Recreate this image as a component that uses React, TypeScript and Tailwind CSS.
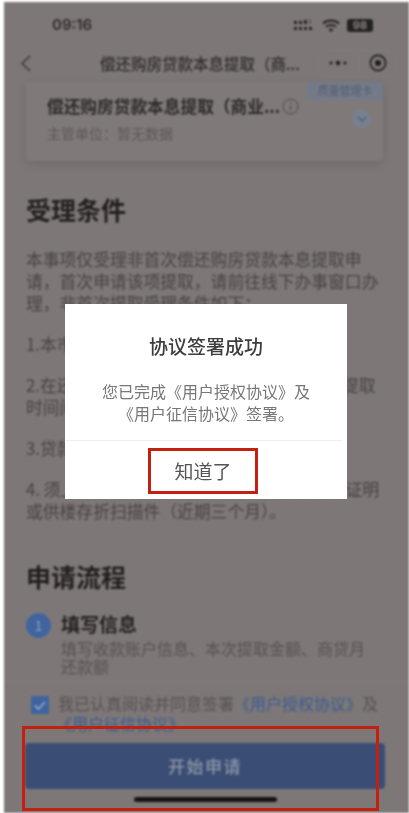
const font = '[font-family:"Noto_Sans_CJK_SC","Noto_Sans",sans-serif]';

function StatusBar() {
  return (
    <div className="flex h-[43px] items-start justify-between pl-[48px] pr-[36px] pt-[13px]">
      <span className="text-[15px] leading-[20px] font-semibold text-[#2f2c2c] [font-family:Inter,sans-serif]">09:16</span>
      <div className="flex h-[20px] items-center gap-[7px]">
        <svg width="21" height="13" viewBox="0 0 21 13" fill="#262323">
          <rect x="0" y="2" width="3" height="3" />
          <rect x="5" y="2" width="3" height="3" />
          <rect x="10" y="1" width="3" height="4" />
          <rect x="15" y="0" width="2" height="5" fill="#5f5b5b" />
          <rect x="0" y="8" width="3" height="3" />
          <rect x="5" y="8" width="3" height="3" />
          <rect x="10" y="8" width="3" height="3" />
          <rect x="15" y="8" width="3" height="3" />
        </svg>
        <svg width="18" height="13" viewBox="0 0 18 13" fill="none" stroke="#262323" strokeWidth="2">
          <path d="M1 4.5C5.5 .5 12.5 .5 17 4.5" />
          <path d="M4 7.8C6.8 5.5 11.2 5.5 14 7.8" />
          <path d="M9 13L6.5 10.3C8 9.2 10 9.2 11.5 10.3Z" fill="#262323" stroke="none" />
        </svg>
        <span className="flex h-[13px] w-[26px] items-center justify-center rounded-[3px] bg-[#242121] text-[11px] leading-none font-bold text-[#8a8585] [font-family:Inter,sans-serif]">98</span>
      </div>
    </div>
  );
}

function NavBar() {
  return (
    <div className="flex h-[36px] items-center pl-[16px] pr-[6px]">
      <svg width="11" height="17" viewBox="0 0 11 17" fill="none" stroke="#3a3737" strokeWidth="1.5">
        <path d="M10 1L2 8.5L10 16" />
      </svg>
      <span className="ml-[69px] w-[213px] text-[15.5px] leading-[22px] font-medium whitespace-nowrap text-[#2f2c2c]">偿还购房贷款本息提取（商...</span>
      <div className="ml-[4px] flex h-[27px] w-[81px] items-center rounded-full border border-[#827d7c]">
        <span className="flex w-[40px] justify-center">
          <svg width="20" height="6" viewBox="0 0 20 6" fill="#1f1c1c">
            <circle cx="3" cy="3" r="1.5" />
            <circle cx="10" cy="3" r="2.2" />
            <circle cx="17" cy="3" r="1.5" />
          </svg>
        </span>
        <span className="h-[18px] w-px bg-[#837e7d]" />
        <span className="flex flex-1 justify-center">
          <svg width="18" height="18" viewBox="0 0 18 18" fill="none" stroke="#1f1c1c" strokeWidth="1.6">
            <circle cx="9" cy="9" r="7.6" />
            <circle cx="9" cy="9" r="3" fill="#1f1c1c" stroke="none" />
          </svg>
        </span>
      </div>
    </div>
  );
}

function ServiceCard() {
  return (
    <div className="relative ml-[22px] mt-[1px] h-[79px] w-[357px] rounded-b-[4px] bg-[#7f7a79] pl-[21px] pt-[12px] shadow-[0_3px_8px_rgba(50,46,46,0.18)]">
      <span className="absolute right-0 top-0 h-[18px] w-[76px] bg-[#737a8a] text-center text-[11px] leading-[17px] text-[#575d6b]">质量管理卡</span>
      <div className="flex items-center">
        <span className="text-[16.7px] leading-[24px] font-bold whitespace-nowrap text-[#2d2a2a]">偿还购房贷款本息提取（商业...</span>
        <svg className="ml-[2px]" width="17" height="17" viewBox="0 0 17 17" fill="none" stroke="#4d4949">
          <circle cx="8.5" cy="8.5" r="7.5" />
          <path d="M8.5 7.5V12.5M8.5 4.5V6" />
        </svg>
      </div>
      <p className="mt-[5px] text-[14px] leading-[20px] text-[#5c5857]">主管单位：暂无数据</p>
      <span className="absolute right-[12px] top-[27px] flex h-[19px] w-[19px] items-center justify-center rounded-full bg-[#76808f]">
        <svg width="10" height="6" viewBox="0 0 10 6" fill="none" stroke="#545d70" strokeWidth="1.4">
          <path d="M1 1L5 5L9 1" />
        </svg>
      </span>
    </div>
  );
}

function Conditions() {
  return (
    <div className="mt-[32px] px-[22px]">
      <h2 className="text-[25px] leading-[32px] font-bold text-[#221f1f]">受理条件</h2>
      <div className="mt-[23px] flex flex-col gap-[19px] text-[16.8px] leading-[22px] whitespace-nowrap text-[#474343]">
        <p>本事项仅受理非首次偿还购房贷款本息提取申<br />请，首次申请该项提取，请前往线下办事窗口办<br />理，非首次提取受理条件如下：</p>
        <p>1.本市公积金缴存职工</p>
        <p>2.在还款期内的商业住房贷款，且符合规定提取<br />时间间隔要求</p>
        <p>3.贷款正常还款</p>
        <p>4. 须上传近期商业银行贷款结清证明或还款证明<br />或供楼存折扫描件（近期三个月）。</p>
      </div>
    </div>
  );
}

function Process() {
  return (
    <div className="mt-[38px] px-[22px]">
      <h2 className="text-[25px] leading-[32px] font-bold text-[#221f1f]">申请流程</h2>
      <div className="mt-[20px] flex gap-[10px]">
        <span className="mt-[1px] flex h-[25px] w-[25px] shrink-0 items-center justify-center rounded-full bg-[#41649f] text-[14px] text-[#85a0c8]">1</span>
        <div>
          <p className="text-[19px] leading-[24px] font-bold text-[#221f1f]">填写信息</p>
          <p className="mt-[3px] text-[16px] leading-[18px] text-[#565251]">填写收款账户信息、本次提取金额、商贷月<br />还款额</p>
        </div>
      </div>
    </div>
  );
}

function Footer() {
  return (
    <div className="mt-[6px] border-t border-[#827d7c]">
      <div className="flex gap-[9px] pl-[27px] pt-[14px]">
        <span className="flex h-[18px] w-[18px] shrink-0 items-center justify-center bg-[#3f63a0]">
          <svg width="12" height="9" viewBox="0 0 12 9" fill="none" stroke="#8ea5c8" strokeWidth="1.8">
            <path d="M1 4.5L4.5 8L11 1" />
          </svg>
        </span>
        <p className="mt-[-3px] text-[16px] leading-[20px] whitespace-nowrap text-[#565251]">
          我已认真阅读并同意签署<span className="text-[#3a5a92]">《用户授权协议》</span>及<br />
          <span className="ml-[-2px] text-[#3a5a92]">《用户征信协议》</span>
        </p>
      </div>
      <div className="ml-[21px] mt-[10px] flex h-[46px] w-[360px] items-center justify-center rounded-[4px] bg-[#3a4d75] text-[17px] font-medium tracking-[1.5px] text-[#8f97a8]">开始申请</div>
      <div className="ml-[130px] mt-[8px] h-[5px] w-[143px] rounded-full bg-[#141212]" />
    </div>
  );
}

function Dialog() {
  return (
    <div className="absolute left-[65px] top-[304px] flex h-[195px] w-[282px] flex-col items-center bg-white blur-[0.3px]">
      <h3 className="mt-[28px] text-[19px] leading-[28px] font-medium text-[#3d3d3d]">协议签署成功</h3>
      <p className="mt-[20px] text-center text-[16px] leading-[22px] text-[#777777]">您已完成《用户授权协议》及<br />《用户征信协议》签署。</p>
      <div className="mt-[16px] h-px w-[277px] self-start bg-[#eeeeee]" />
      <button className="mr-[6px] mt-[7px] flex h-[46px] w-[110px] items-center justify-center border-[3px] border-[#c32010] text-[19px] text-[#555555]">知道了</button>
    </div>
  );
}

export default function App() {
  return (
    <div className={`relative h-[813px] w-[409px] overflow-hidden bg-white ${font}`}>
      <div className="absolute inset-0 left-[4px] top-[2px] overflow-hidden bg-[#7d7877] blur-[0.8px]">
        <StatusBar />
        <NavBar />
        <ServiceCard />
        <Conditions />
        <Process />
        <Footer />
      </div>
      <Dialog />
      {/* red annotation round the start button */}
      <div className="absolute left-[22px] top-[726px] h-[85px] w-[357px] border-[3px] border-[#c32010]" />
    </div>
  );
}
